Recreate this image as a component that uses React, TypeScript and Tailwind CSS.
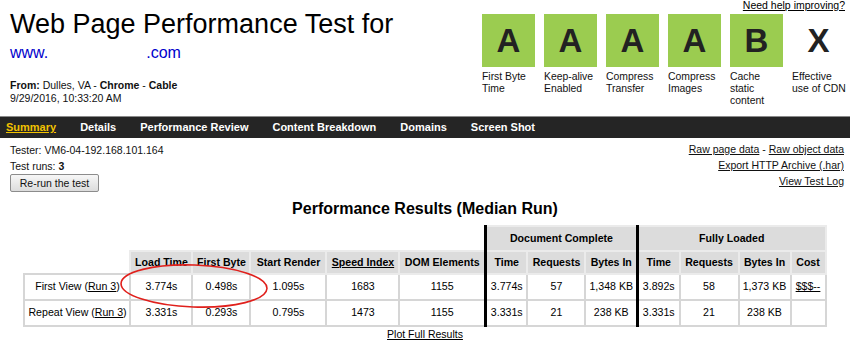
import React from "react";

type Grade = { letter: string; label: string[]; filled: boolean };

const grades: Grade[] = [
  { letter: "A", label: ["First Byte", "Time"], filled: true },
  { letter: "A", label: ["Keep-alive", "Enabled"], filled: true },
  { letter: "A", label: ["Compress", "Transfer"], filled: true },
  { letter: "A", label: ["Compress", "Images"], filled: true },
  { letter: "B", label: ["Cache", "static", "content"], filled: true },
  { letter: "X", label: ["Effective", "use of CDN"], filled: false },
];

const navItems = ["Summary", "Details", "Performance Review", "Content Breakdown", "Domains", "Screen Shot"];

const GradeBox = ({ grade }: { grade: Grade }) => (
  <div className="flex w-[53px] flex-col">
    <div
      className={`flex h-[53px] w-[53px] items-center justify-center text-[33px] font-bold text-[#222] ${
        grade.filled ? "bg-[#9bcc50]" : ""
      }`}
    >
      {grade.letter}
    </div>
    <div className="mt-[4px] text-[10.4px] leading-[12px] text-[#111]">
      {grade.label.map((l) => (
        <div key={l} className="whitespace-nowrap">
          {l}
        </div>
      ))}
    </div>
  </div>
);

const th = "h-[23px] border-2 border-[#ebebeb] bg-[#dcdcdc] px-[3px] text-center font-bold whitespace-nowrap";
const td = "h-[25px] border-2 border-[#d6d6d6] px-[3px] text-center whitespace-nowrap";
const thick = "border-l-[3px] border-l-black";

type Row = {
  view: string;
  cells: string[];
  cost: string;
};

const rows: Row[] = [
  {
    view: "First View",
    cells: ["3.774s", "0.498s", "1.095s", "1683", "1155", "3.774s", "57", "1,348 KB", "3.892s", "58", "1,373 KB"],
    cost: "$$$--",
  },
  {
    view: "Repeat View",
    cells: ["3.331s", "0.293s", "0.795s", "1473", "1155", "3.331s", "21", "238 KB", "3.331s", "21", "238 KB"],
    cost: "",
  },
];

const ResultsTable = () => (
  <table className="mx-auto w-[801px] table-fixed border-collapse text-[10.6px] text-black">
    <colgroup>
      <col className="w-[106px]" />
      <col className="w-[62px]" />
      <col className="w-[58px]" />
      <col className="w-[76px]" />
      <col className="w-[73px]" />
      <col className="w-[86px]" />
      <col className="w-[42px]" />
      <col className="w-[58px]" />
      <col className="w-[52px]" />
      <col className="w-[42px]" />
      <col className="w-[59px]" />
      <col className="w-[52px]" />
      <col className="w-[35px]" />
    </colgroup>
    <thead>
      <tr>
        <th colSpan={6} className="h-[25px] border-0"></th>
        <th colSpan={3} className={`${th} h-[25px] ${thick}`}>
          Document Complete
        </th>
        <th colSpan={4} className={`${th} h-[25px] ${thick}`}>
          Fully Loaded
        </th>
      </tr>
      <tr>
        <th className="border-0"></th>
        <th className={th}>Load Time</th>
        <th className={th}>First Byte</th>
        <th className={th}>Start Render</th>
        <th className={th}>
          <span className="underline">Speed Index</span>
        </th>
        <th className={th}>DOM Elements</th>
        <th className={`${th} ${thick}`}>Time</th>
        <th className={th}>Requests</th>
        <th className={th}>Bytes In</th>
        <th className={`${th} ${thick}`}>Time</th>
        <th className={th}>Requests</th>
        <th className={th}>Bytes In</th>
        <th className={th}>Cost</th>
      </tr>
    </thead>
    <tbody>
      {rows.map((r) => (
        <tr key={r.view}>
          <td className={`${td} h-[26px]`}>
            {r.view} (<span className="underline">Run 3</span>)
          </td>
          {r.cells.map((c, i) => (
            <td key={i} className={`${td} h-[26px] ${i === 5 || i === 8 ? thick : ""}`}>
              {c}
            </td>
          ))}
          <td className={`${td} h-[26px]`}>{r.cost && <span className="underline">{r.cost}</span>}</td>
        </tr>
      ))}
    </tbody>
  </table>
);

export default function App() {
  return (
    <div className="relative h-[340px] w-[850px] overflow-hidden bg-white font-['Liberation_Sans',Arial,sans-serif] text-black">
      <header className="flex h-[116px] justify-between pr-[5px]">
        <div className="pl-[10px] pt-[8px]">
          <h1 className="text-[27px] leading-[32px] font-normal">Web Page Performance Test for</h1>
          <div className="mt-[3px] text-[16px] leading-[20px] text-[#0000cc]">
            www.<span className="inline-block w-[98px]"></span>.com
          </div>
          <div className="mt-[16px] text-[10.5px] leading-[13px] text-[#111]">
            <div>
              <b>From:</b> Dulles, VA - <b>Chrome</b> - <b>Cable</b>
            </div>
            <div>9/29/2016, 10:33:20 AM</div>
          </div>
        </div>
        <div className="flex flex-col items-end">
          <a className="text-[10.5px] leading-[11px] text-black underline">Need help improving?</a>
          <div className="mt-[3px] flex gap-[9px]">
            {grades.map((g, i) => (
              <GradeBox key={i} grade={g} />
            ))}
          </div>
        </div>
      </header>

      <nav className="flex h-[22px] items-center gap-[24px] border-t border-[#8a8a8a] bg-[#252525] pl-[6px] text-[11px] font-bold text-white">
        {navItems.map((n, i) => (
          <a key={n} className={i === 0 ? "text-[#f2c200] underline" : ""}>
            {n}
          </a>
        ))}
      </nav>

      <section className="flex h-[61px] justify-between pl-[10px] pr-[6px] text-[10.5px] text-[#111]">
        <div className="pt-[4px] leading-[16px]">
          <div>Tester: VM6-04-192.168.101.164</div>
          <div>
            Test runs: <b>3</b>
          </div>
          <button className="h-[18px] w-[89px] rounded-[2px] border border-[#8c8c8c] bg-linear-to-b from-[#f7f7f7] to-[#dcdcdc] text-[10.5px] leading-[16px]">
            Re-run the test
          </button>
        </div>
        <div className="pt-[3px] text-right leading-[16px]">
          <div>
            <a className="underline">Raw page data</a> - <a className="underline">Raw object data</a>
          </div>
          <div>
            <a className="underline">Export HTTP Archive (.har)</a>
          </div>
          <div>
            <a className="underline">View Test Log</a>
          </div>
        </div>
      </section>

      <h2 className="text-center text-[16px] leading-[20px] font-bold">Performance Results (Median Run)</h2>

      <div className="mt-[6px]">
        <ResultsTable />
      </div>

      <div className="text-center text-[10.5px] leading-[14px]">
        <a className="underline">Plot Full Results</a>
      </div>

      <svg className="pointer-events-none absolute left-[116px] top-[260px]" width="156" height="52" viewBox="0 0 156 52">
        <ellipse
          cx="78"
          cy="26"
          rx="73"
          ry="21"
          fill="none"
          stroke="#e0201c"
          strokeWidth="1.6"
          transform="rotate(2 78 26)"
        />
      </svg>
    </div>
  );
}
